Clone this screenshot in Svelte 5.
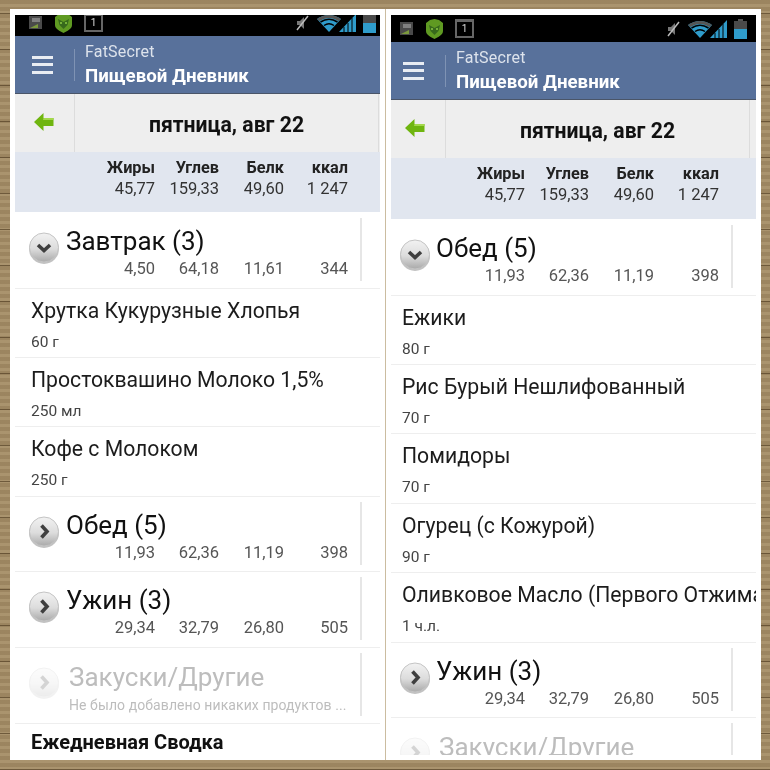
<script>
  const nums = {
    breakfast: ['4,50', '64,18', '11,61', '344'],
    lunch: ['11,93', '62,36', '11,19', '398'],
    dinner: ['29,34', '32,79', '26,80', '505']
  };

  const left = [
    { type: 'section', open: true, name: 'Завтрак (3)', values: nums.breakfast },
    { type: 'item', name: 'Хрутка Кукурузные Хлопья', amount: '60 г' },
    { type: 'item', name: 'Простоквашино Молоко 1,5%', amount: '250 мл' },
    { type: 'item', name: 'Кофе с Молоком', amount: '250 г' },
    { type: 'section', name: 'Обед (5)', values: nums.lunch },
    { type: 'section', name: 'Ужин (3)', values: nums.dinner },
    { type: 'empty' },
    { type: 'summary' }
  ];

  const right = [
    { type: 'section', open: true, name: 'Обед (5)', values: nums.lunch },
    { type: 'item', name: 'Ежики', amount: '80 г' },
    { type: 'item', name: 'Рис Бурый Нешлифованный', amount: '70 г' },
    { type: 'item', name: 'Помидоры', amount: '70 г' },
    { type: 'item', name: 'Огурец (с Кожурой)', amount: '90 г' },
    { type: 'item', name: 'Оливковое Масло (Первого Отжима)', amount: '1 ч.л.' },
    { type: 'section', name: 'Ужин (3)', values: nums.dinner },
    { type: 'empty' }
  ];
</script>

{#snippet toggle(open, faded)}
  <svg class="toggle" class:faded width="32" height="32" viewBox="0 0 32 32">
    <defs>
      <linearGradient id="ball" x1="0" y1="0" x2="0" y2="1">
        <stop offset="0" stop-color="#f2f2f2" />
        <stop offset="0.55" stop-color="#dcdcdc" />
        <stop offset="1" stop-color="#a9a9a9" />
      </linearGradient>
    </defs>
    <circle cx="16" cy="17" r="15" fill="#8f8f8f" opacity="0.55" />
    <circle cx="16" cy="15.500" r="14.500" fill="url(#ball)" stroke="#c4c4c4" />
    <path
      d={open ? 'M10 13l6 5.500 6-5.500' : 'M13.500 9.500l5.500 6-5.500 6'}
      fill="none"
      stroke="#3f3f3f"
      stroke-width="3.600"
    />
  </svg>
{/snippet}

{#snippet statusBar()}
  <div class="status">
    <div class="status-group">
      <svg width="14" height="13" viewBox="0 0 14 13">
        <rect width="13" height="13" fill="#4a4a4a" />
        <path d="M1 12l8-4v4z" fill="#7c9a3c" />
        <rect x="3" y="2" width="8" height="4" fill="#808080" />
      </svg>
      <svg width="19" height="20" viewBox="0 0 19 20">
        <path d="M1 4l4-3 4.500-1L14 1l4 3v8c0 4-5 6-8.500 8C6 18 1 16 1 12z" fill="#5f9a22" />
        <path d="M4 6l5.500 3L15 6l-1.500 6-4 4-4-4z" fill="#37691c" />
        <circle cx="7" cy="10" r="1" fill="#8ccb45" />
        <circle cx="12" cy="10" r="1" fill="#8ccb45" />
      </svg>
      <div class="ic-box">1</div>
    </div>
    <div class="status-group right">
      <svg width="16" height="16" viewBox="0 0 16 16">
        <path d="M3 6h3l4-4v12l-4-4H3z" fill="#777" />
        <path d="M14 1L3 15" stroke="#bbb" stroke-width="1.500" />
      </svg>
      <svg class="ic-wifi" width="24" height="18" viewBox="0 0 24 18">
        <path d="M0 5Q12-3 24 5L12 18z" fill="#2f9ccb" />
        <path d="M0 5Q12-3 24 5L21.500 7Q12 1 2.500 7z" fill="#555" />
        <path d="M3.500 8Q12 2.500 20.500 8" fill="none" stroke="#000" stroke-width="1.500" />
        <path d="M7 11.500Q12 8 17 11.500" fill="none" stroke="#000" stroke-width="1.500" />
      </svg>
      <svg width="17" height="18" viewBox="0 0 17 18">
        <path d="M0 18L17 0v18z" fill="#2f9ccb" />
        <path d="M5 18V13M9 18V9M13 18V4" stroke="#000" stroke-width="1" />
      </svg>
      <svg width="13" height="20" viewBox="0 0 13 20">
        <rect x="4" width="5" height="2" fill="#555" />
        <rect y="2" width="13" height="18" fill="#4a4a4a" />
        <rect y="10" width="13" height="10" fill="#2f9ccb" />
      </svg>
    </div>
  </div>
{/snippet}

{#snippet phone(rows, variant)}
  <div class="card {variant}">
    <div class="screen">
      {@render statusBar()}
      <header class="appbar">
        <div class="burger"><i></i><i></i><i></i></div>
        <div class="titles">
          <div class="app-name">FatSecret</div>
          <div class="page-name">Пищевой Дневник</div>
        </div>
      </header>
      <div class="datebar">
        <div class="back">
          <svg width="20" height="18" viewBox="0 0 20 18">
            <path d="M9.500 0v5H19.500v8H9.500v5L0 9z" fill="#6fb50f" />
            <path d="M9.500 5H19.500v2H9z" fill="#a3d84a" />
          </svg>
        </div>
        <div class="date">пятница, авг 22</div>
      </div>
      <div class="totals">
        <div class="cols heads">
          <span>Жиры</span><span>Углев</span><span>Белк</span><span>ккал</span>
        </div>
        <div class="cols">
          <span>45,77</span><span>159,33</span><span>49,60</span><span>1 247</span>
        </div>
      </div>
      {#each rows as row}
        {#if row.type === 'section'}
          <div class="row section">
            <div class="section-main">
              <div class="icon-cell">{@render toggle(row.open, false)}</div>
              <div class="section-name">{row.name}</div>
              <div class="cols values">
                {#each row.values as value}
                  <span>{value}</span>
                {/each}
              </div>
            </div>
          </div>
        {:else if row.type === 'item'}
          <div class="row item">
            <div class="item-name">{row.name}</div>
            <div class="amount">{row.amount}</div>
          </div>
        {:else if row.type === 'empty'}
          <div class="row section">
            <div class="section-main">
              <div class="icon-cell">{@render toggle(false, true)}</div>
              <div class="section-name muted">Закуски/Другие</div>
              <div class="hint">Не было добавлено никаких продуктов ...</div>
            </div>
          </div>
        {:else}
          <div class="summary">Ежедневная Сводка</div>
        {/if}
      {/each}
    </div>
  </div>
{/snippet}

<div class="board">
  {@render phone(left, 'first')}
  <div class="seam"></div>
  {@render phone(right, 'second')}
</div>

<style>
  :global(body) {
    margin: 0;
  }

  .board {
    width: 770px;
    height: 770px;
    box-sizing: border-box;
    padding: 9px 9px 10px 10px;
    display: flex;
    background-color: #a38c66;
    background-image:
      repeating-linear-gradient(0deg, rgba(85, 65, 38, 0.7) 0 1px, transparent 1px 36px),
      repeating-linear-gradient(0deg, rgba(255, 240, 205, 0.08) 0 3px, rgba(70, 50, 25, 0.08) 3px 7px);
    font-family: Roboto, "Noto Sans", sans-serif;
  }

  .seam {
    width: 1px;
    flex: none;
    background: #cbbca0;
  }

  .card {
    --shift: 5px;
    --wide: 6px;
    width: 375px;
    height: 751px;
    flex: none;
    box-sizing: border-box;
    padding: 6px 5px 5px;
    background: #fff;
    filter: blur(0.4px);
  }

  .second {
    --shift: 0px;
    --wide: 0px;
  }

  .screen {
    height: 100%;
    overflow: hidden;
    background: #fff;
  }

  .status {
    height: 21px;
    background: #000;
    overflow: hidden;
    display: flex;
    justify-content: space-between;
    align-items: flex-end;
    padding: 0 calc(9px - var(--shift)) 0 calc(9px + var(--shift));
  }

  .second .status {
    height: 27px;
  }

  .status-group {
    display: flex;
    align-items: center;
    height: 27px;
    flex: none;
    gap: 11px;
  }

  .status-group.right {
    gap: 7px;
  }

  .ic-box {
    width: 15px;
    height: 14px;
    border: 2px solid #666;
    border-top-width: 3px;
    color: #ddd;
    font-size: 10px;
    line-height: 13px;
    text-align: center;
  }

  .ic-wifi {
    margin-right: -9px;
  }

  .appbar {
    height: 57px;
    background: #58719b;
    border-bottom: 1px solid #4a5568;
    display: flex;
    align-items: center;
  }

  .burger {
    width: calc(55px + var(--shift));
    height: 32px;
    box-sizing: border-box;
    border-right: 1px solid #7f93b4;
    display: flex;
    flex-direction: column;
    justify-content: center;
    gap: 4.500px;
    padding-left: calc(12px + var(--shift));
    flex: none;
  }

  .burger i {
    display: block;
    width: 21px;
    height: 3px;
    background: #e9edf3;
  }

  .titles {
    margin-left: 10px;
  }

  .app-name {
    color: #dde3ec;
    font-size: 16px;
    line-height: 20px;
    margin-top: 1px;
    letter-spacing: 0.2px;
  }

  .page-name {
    color: #fff;
    font-size: 18.700px;
    font-weight: 700;
    line-height: 26px;
    margin-top: 1px;
  }

  .datebar {
    height: 58px;
    display: flex;
    background: #eeeeee;
  }

  .back {
    width: calc(55px + var(--shift));
    box-sizing: border-box;
    border-right: 1px solid #dcdcdc;
    padding: 19px 0 0 calc(14px + var(--shift));
    flex: none;
  }

  .date {
    width: 304px;
    box-sizing: border-box;
    border-right: 1px solid #dcdcdc;
    text-align: center;
    font-size: 21.200px;
    font-weight: 700;
    color: #111;
    line-height: 62px;
  }

  .totals {
    height: 60px;
    margin-bottom: 1px;
    background: #e1e6ef;
    padding-top: 6px;
    box-sizing: border-box;
  }

  .second .totals {
    height: 61px;
  }

  .cols {
    display: grid;
    grid-template-columns: calc(134px + var(--wide)) 64px 65px calc(65px - var(--wide) / 6);
    justify-items: end;
    font-size: 16.500px;
    line-height: 21px;
    color: #333;
  }

  .heads {
    font-weight: 700;
    color: #222;
    font-size: 16.300px;
    line-height: 20px;
  }

  .values {
    grid-column: 1 / 3;
    grid-row: 2;
    color: #555;
  }

  .row {
    border-bottom: 1px solid #eeeeee;
    box-sizing: border-box;
  }

  .section {
    height: 75.600px;
    padding: 5px 0 7px;
  }

  .section-main {
    width: calc(342px + var(--shift));
    height: 63px;
    box-sizing: border-box;
    border-right: 2px solid #e6e6e6;
    display: grid;
    grid-template-columns: calc(45px + var(--wide)) 1fr;
    grid-template-rows: 40px 23px;
  }

  .icon-cell {
    grid-column: 1;
    grid-row: 1 / 3;
    padding: 14px 0 0 calc(8px + var(--shift));
  }

  .toggle {
    display: block;
  }

  .toggle.faded {
    opacity: 0.22;
  }

  .section-name {
    grid-column: 2;
    grid-row: 1;
    font-size: 26px;
    line-height: 46px;
    color: #111;
    white-space: nowrap;
  }

  .section-name.muted {
    color: #bdbdbd;
    margin-left: 3px;
    line-height: 48px;
  }

  .hint {
    grid-column: 2;
    grid-row: 2;
    margin-left: 3px;
    font-size: 14px;
    line-height: 24px;
    color: #bdbdbd;
    white-space: nowrap;
    letter-spacing: 0.08px;
  }

  .item {
    height: 69.400px;
    padding: 9px 0 0 calc(11px + var(--shift));
    white-space: nowrap;
    overflow: hidden;
  }

  .item-name {
    font-size: 21.200px;
    line-height: 26px;
    color: #1c1c1c;
  }

  .amount {
    font-size: 15.500px;
    line-height: 20px;
    margin-top: 8px;
    color: #444;
  }

  .summary {
    font-size: 20px;
    font-weight: 700;
    color: #111;
    padding: 4px 0 0 16px;
    line-height: 28px;
  }
</style>
